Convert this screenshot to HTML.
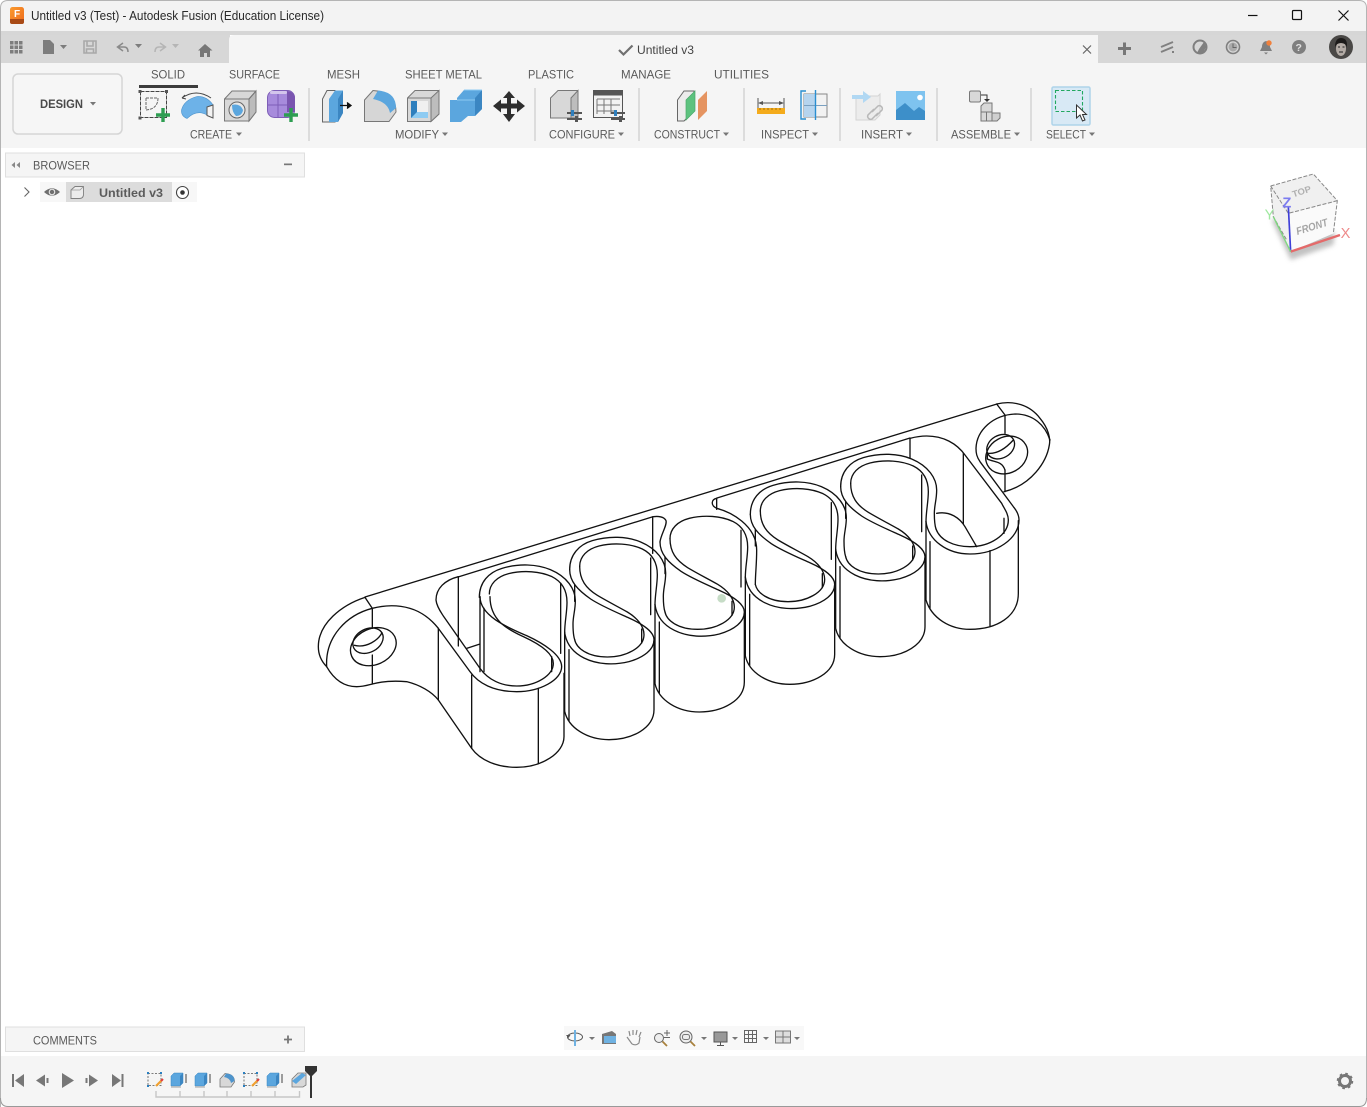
<!DOCTYPE html>
<html><head><meta charset="utf-8"><title>Untitled v3 (Test) - Autodesk Fusion (Education License)</title>
<style>html,body{margin:0;padding:0;background:#fff;overflow:hidden}svg{display:block}text{font-family:"Liberation Sans",sans-serif}</style></head>
<body>
<svg xmlns="http://www.w3.org/2000/svg" width="1367" height="1107" viewBox="0 0 1367 1107">
<defs>
<filter id="bl"><feGaussianBlur stdDeviation="7"/></filter>
<linearGradient id="org" x1="0" y1="0" x2="1" y2="1"><stop offset="0" stop-color="#fa9a2e"/><stop offset="1" stop-color="#ee6a1c"/></linearGradient>
<g id="to"><path d="M122,290 C122,245 150,215 190,203 C240,188 295,190 335,207 C385,228 410,265 410,300 C410,330 403,345 403,370 C403,390 404,405 408,417"/></g>
<g id="ti"><path d="M152,280 C152,250 175,228 210,219 C255,208 305,212 340,228 C370,243 385,270 385,305 C385,335 378,365 378,395"/></g>
<g id="b"><path d="M107,478 C112,515 135,540 165,555 C205,575 255,577 300,566 C345,553 375,530 375,500 C375,478 345,455 300,435 C260,417 215,398 185,378 C145,350 122,325 122,290"/>
<path d="M137,500 C142,525 175,552 235,552 C290,552 345,525 345,485 C345,460 325,435 295,417 C265,400 235,385 205,367 C170,345 152,320 152,280"/></g>
<g id="v"><path d="M120,530 V745 M107,478 V715 C118,765 175,800 240,800 C310,800 375,765 375,710 V505 M137,335 V385 M365,255 V425 M338,468 V510"/></g>
</defs>

<!-- backdrop -->
<rect width="1367" height="1107" fill="#fff"/>
<rect x="1366" y="130" width="1" height="40" fill="#b5562a"/>
<!-- title bar -->
<path d="M0,8 Q0,1 8,1 H1359 Q1366,1 1366,8 V31 H0Z" fill="#f3f3f3"/>
<rect x="0" y="31" width="1366" height="4" fill="#d6d6d6"/>
<rect x="0" y="35" width="230" height="28" fill="#d7d7d7"/>
<rect x="1098" y="35" width="268" height="28" fill="#d7d7d7"/>
<path d="M229,63 V40 Q229,35 234,35 H1098 V63Z" fill="#f5f5f5"/>
<rect x="0" y="63" width="1366" height="85" fill="#f5f5f5"/>
<path d="M0,1056 H1366 V1098 Q1366,1106 1358,1106 H8 Q0,1106 0,1098Z" fill="#f5f5f5"/>
<path d="M.5,1107 V8 Q.5,.5 8,.5 H1359 Q1366.5,.5 1366.5,8 V1098" fill="none" stroke="#b4b4b4"/>
<path d="M.5,1098 Q.5,1106.5 8,1106.5 H1359 Q1366.5,1106.5 1366.5,1098" fill="none" stroke="#999"/>

<!-- app logo + title -->
<rect x="10" y="7" width="14" height="17" rx="2.5" fill="url(#org)"/>
<path d="M10,19 H24 V22 Q24,24 22,24 H12 Q10,24 10,22Z" fill="#a84a16"/>
<text x="14" y="17" font-size="10" font-weight="bold" fill="#fff">F</text>
<text x="31" y="20" font-size="12.5" fill="#2a2a2a" textLength="293" lengthAdjust="spacingAndGlyphs">Untitled v3 (Test) - Autodesk Fusion (Education License)</text>
<path d="M1248,15.5 H1257.5" stroke="#111" stroke-width="1.2"/>
<rect x="1292.5" y="10.5" width="9" height="9" rx="1" fill="none" stroke="#111" stroke-width="1.2"/>
<path d="M1338.5,10.5 L1348.5,20.5 M1348.5,10.5 L1338.5,20.5" stroke="#111" stroke-width="1.2"/>

<!-- quick toolbar -->
<g fill="#7d7d7d"><rect x="10" y="41" width="3.5" height="3.5"/><rect x="14.5" y="41" width="3.5" height="3.5"/><rect x="19" y="41" width="3.5" height="3.5"/><rect x="10" y="45.5" width="3.5" height="3.5"/><rect x="14.5" y="45.5" width="3.5" height="3.5"/><rect x="19" y="45.5" width="3.5" height="3.5"/><rect x="10" y="50" width="3.5" height="3.5"/><rect x="14.5" y="50" width="3.5" height="3.5"/><rect x="19" y="50" width="3.5" height="3.5"/></g>
<path d="M43,40 H50 L54,44 V54 H43Z" fill="#7d7d7d"/><path d="M60,45 H67 L63.5,49Z" fill="#7d7d7d"/>
<path d="M84,41 H96 V53 H84Z M87,41 V46 H93 V41 M86.5,53 V49 H93.5 V53" fill="none" stroke="#a9a9a9" stroke-width="1.6"/>
<path d="M123,43 L117.5,47 L123,51 M118,47 H124 Q128,47 128,52" fill="none" stroke="#8a8a8a" stroke-width="1.5"/>
<path d="M135,44 H142 L138.5,48Z" fill="#7d7d7d"/>
<path d="M160,43 L165.5,47 L160,51 M165,47 H159 Q155,47 155,52" fill="none" stroke="#b5b5b5" stroke-width="1.5"/>
<path d="M172,44 H179 L175.5,48Z" fill="#b5b5b5"/>
<path d="M205,44 L198,50.5 H200 V57 H204 V53 H207 V57 H210 V50.5 H212.5Z" fill="#777"/>

<!-- doc tab -->
<path d="M619,50 L623.5,54.5 L632.5,45.5" fill="none" stroke="#707070" stroke-width="2.2"/>
<text x="637" y="54" font-size="12" fill="#444" textLength="57" lengthAdjust="spacingAndGlyphs">Untitled v3</text>
<path d="M1083,45.5 L1091,53.5 M1091,45.5 L1083,53.5" stroke="#666" stroke-width="1.2"/>
<path d="M1124.5,42.5 V55 M1118,48.5 H1131" stroke="#777" stroke-width="3"/>
<!-- right icons -->
<g stroke="#808080" stroke-width="2" fill="none"><path d="M1161,47 L1173,42 M1161,52 L1173,47"/><path d="M1172,52 h2"/></g>
<circle cx="1200" cy="47" r="6.5" fill="none" stroke="#7f7f7f" stroke-width="2"/><path d="M1199,49 L1204,42 L1206,47 L1203,53 L1197,53Z" fill="#7f7f7f"/>
<circle cx="1233" cy="47" r="6.5" fill="none" stroke="#7f7f7f" stroke-width="1.6"/><circle cx="1233" cy="47" r="4.5" fill="#aaa"/><path d="M1233,43.5 V47.5 H1236.5" stroke="#666" fill="none"/>
<path d="M1266,41 Q1270,42 1270,47 L1272,51 H1260 L1262,47 Q1262,42 1266,41Z M1264,52.5 H1268 L1266,54.5Z" fill="#7f7f7f"/><circle cx="1269" cy="43" r="2.7" fill="#f0803c"/>
<circle cx="1299" cy="47" r="7" fill="#7f7f7f"/><text x="1295.5" y="51" font-size="10.5" font-weight="bold" fill="#e0e0e0">?</text>
<circle cx="1341" cy="47" r="12" fill="#4a4846"/><ellipse cx="1341" cy="48.500" rx="5" ry="7.500" fill="#b3aba5"/><path d="M1335,45 Q1336,38 1341,38 Q1347,38 1347,45 L1347,48 Q1346,43 1341,43 Q1336,43 1335,48Z" fill="#1d1b1a"/><path d="M1338,47 h2 M1342.500,47 h2 M1339,52 h4" stroke="#222"/>

<!-- ribbon tabs -->
<g font-size="12" fill="#5a5a5a">
<text x="151" y="78.500" textLength="34" lengthAdjust="spacingAndGlyphs">SOLID</text>
<text x="229" y="78.500" textLength="51" lengthAdjust="spacingAndGlyphs">SURFACE</text>
<text x="327" y="78.500" textLength="33" lengthAdjust="spacingAndGlyphs">MESH</text>
<text x="405" y="78.500" textLength="77" lengthAdjust="spacingAndGlyphs">SHEET METAL</text>
<text x="528" y="78.500" textLength="46" lengthAdjust="spacingAndGlyphs">PLASTIC</text>
<text x="621" y="78.500" textLength="50" lengthAdjust="spacingAndGlyphs">MANAGE</text>
<text x="714" y="78.500" textLength="55" lengthAdjust="spacingAndGlyphs">UTILITIES</text>
<text x="190" y="138.500" textLength="42" lengthAdjust="spacingAndGlyphs">CREATE</text>
<text x="395" y="138.500" textLength="44" lengthAdjust="spacingAndGlyphs">MODIFY</text>
<text x="549" y="138.500" textLength="66" lengthAdjust="spacingAndGlyphs">CONFIGURE</text>
<text x="654" y="138.500" textLength="66" lengthAdjust="spacingAndGlyphs">CONSTRUCT</text>
<text x="761" y="138.500" textLength="48" lengthAdjust="spacingAndGlyphs">INSPECT</text>
<text x="861" y="138.500" textLength="42" lengthAdjust="spacingAndGlyphs">INSERT</text>
<text x="951" y="138.500" textLength="60" lengthAdjust="spacingAndGlyphs">ASSEMBLE</text>
<text x="1046" y="138.500" textLength="40" lengthAdjust="spacingAndGlyphs">SELECT</text>
</g>
<g fill="#777"><path d="M236,132.500 h6 l-3,3.500z M442,132.500 h6 l-3,3.500z M618,132.500 h6 l-3,3.500z M723,132.500 h6 l-3,3.500z M812,132.500 h6 l-3,3.500z M906,132.500 h6 l-3,3.500z M1014,132.500 h6 l-3,3.500z M1089,132.500 h6 l-3,3.500z"/></g>
<rect x="139" y="85" width="59" height="3" fill="#3c3c3c"/>
<rect x="13" y="74" width="109" height="60" rx="5" fill="#f6f6f6" stroke="#d5d5d5" stroke-width="1.5"/>
<text x="40" y="108" font-size="12" font-weight="bold" fill="#4a4a4a" textLength="43" lengthAdjust="spacingAndGlyphs">DESIGN</text>
<path d="M90,102 h6 l-3,3.500z" fill="#777"/>
<g fill="#dcdcdc"><rect x="308" y="88" width="2" height="53"/><rect x="534" y="88" width="2" height="53"/><rect x="638" y="88" width="2" height="53"/><rect x="743" y="88" width="2" height="53"/><rect x="839" y="88" width="2" height="53"/><rect x="936" y="88" width="2" height="53"/><rect x="1030" y="88" width="2" height="53"/></g>

<!-- CREATE icons -->
<rect x="140.500" y="91.500" width="26" height="26" fill="none" stroke="#444" stroke-width="1" stroke-dasharray="4 1"/>
<g fill="#555"><rect x="138.500" y="90" width="3" height="3"/><rect x="165" y="90" width="3" height="3"/><rect x="138.500" y="116.500" width="3" height="3"/></g>
<path d="M146,98 H158 M146,98 V110 M146,110 Q158,109 158,98" fill="none" stroke="#666" stroke-width="1" stroke-dasharray="3 1"/>
<path d="M163,108 V122 M156,115 H170" stroke="#2e9e52" stroke-width="3.4"/>
<path d="M181.500,110 Q184,100 197,96.500 Q207,96 213,105 V117 L207,115 Q197,109 187,118.500 Q181,116 181.500,110Z" fill="#6db2e8" stroke="#4e94cc" stroke-width=".6"/>
<path d="M207,107 L213,105 V118 L207,115.500Z" fill="#f3f3f3" stroke="#555"/><path d="M182,98 Q196,88 211,98 M182,98 l3,-3 M182,98 l4,1" fill="none" stroke="#444"/>
<path d="M224.500,99 L232,91 H256 V112 L249,121 H224.500Z" fill="#d8d8d8" stroke="#777"/><path d="M249,99 L256,91 V112 L249,121Z" fill="#bcbcbc" stroke="#777"/><path d="M224.500,99 H249 L256,91" fill="none" stroke="#777"/><circle cx="237" cy="110" r="8" fill="#e8e8e8" stroke="#666"/><path d="M232,105 Q240,103 243,110 Q242,116 236,116 Q232,112 232,105Z" fill="#5ba6de"/>
<rect x="267.500" y="90.500" width="27" height="27" rx="7" fill="#a78bdc" stroke="#7e5eb7"/><path d="M268,105 H287 M278,93 V117" stroke="#7e5eb7"/><path d="M287,91 Q295,92 295,98 V112 H287Z" fill="#7a55b0"/><rect x="270" y="91" width="17" height="3" rx="1.500" fill="#d3c5ec"/>
<path d="M291,108 V122 M284,115 H298" stroke="#2e9e52" stroke-width="3.4"/>

<!-- MODIFY icons -->
<path d="M322.500,99 L327,90.500 H335 V122 H322.500Z" fill="#ececec" stroke="#666"/><path d="M329,99 L335,90.500 H343 V113 L338,122 H329Z" fill="#5ba6de"/><path d="M338,99 L343,90.500 V113 L338,122Z" fill="#3b86c2"/><path d="M340,105.500 H350 M347,102.500 L351,105.500 L347,108.500" fill="#111" stroke="#111" stroke-width="1.3"/>
<path d="M364.500,100 L373,90.500 Q396,92 396,112 L389,121.500 H364.500Z" fill="#d6d6d6" stroke="#777"/><path d="M378,90.500 Q396,92 396,108 L390,113 Q388,102 373,99Z" fill="#5ba6de"/>
<path d="M407.500,98 L415,90.500 H439 V114 L431,121.500 H407.500Z" fill="#d8d8d8" stroke="#777"/><path d="M431,98 L439,90.500 V114 L431,121.500Z" fill="#bdbdbd" stroke="#777"/><path d="M407.500,98 H431" stroke="#777"/><rect x="411" y="101" width="17" height="17" fill="#f0f0f0"/><path d="M411,101 H417 V112 H428 V118 H411Z" fill="#2f7fbd"/><path d="M417,112 H428 V118 H411Z" fill="#8ecbf2"/>
<path d="M450,100 L457,100 V98 L464,90 H482 V109 L475,116 H468 L461,122 H450Z" fill="#5ba6de"/><path d="M475,98 L482,90 V109 L475,116Z" fill="#3b86c2"/><path d="M457,100 H475 M464,90 H482" stroke="#8ecbf2"/>
<path d="M509,91 L515,98 H511 V103.500 H517 V99.500 L525,106 L517,112.500 V108.500 H511 V114 H515 L509,122 L503,114 H507 V108.500 H501 V112.500 L493,106 L501,99.500 V103.500 H507 V98 H503Z" fill="#2e2e2e"/>

<!-- CONFIGURE icons -->
<path d="M550.500,98 L558,90.500 H578 V118 H550.500Z" fill="#d8d8d8" stroke="#777"/><path d="M571,98 L578,90.500 V118 H571Z" fill="#bdbdbd" stroke="#777"/>
<path d="M567,113 H582 M567,119 H582" stroke="#555" stroke-width="2"/><rect x="571" y="110" width="3" height="6" fill="#2f7fbd"/><rect x="575" y="116" width="3" height="6" fill="#555"/>
<rect x="593.500" y="90.500" width="29" height="27" fill="#f2f2f2" stroke="#555"/><rect x="593.500" y="90.500" width="29" height="5" fill="#555"/>
<path d="M597,99 H620 M597,105 H620 M597,111 H615 M597,99 V114 M604,99 V114 M611,99 V114" stroke="#777" fill="none"/>
<path d="M611,113 H625 M611,119 H625" stroke="#555" stroke-width="2"/><rect x="614" y="110" width="3" height="6" fill="#2f7fbd"/><rect x="619" y="116" width="3" height="6" fill="#555"/>

<!-- CONSTRUCT -->
<path d="M677.500,100 L684,91 H694 V111 L684,121 H677.500Z" fill="#ececec" stroke="#666"/><path d="M686,100 L695,91 V111 L686,120Z" fill="#5cc27e" stroke="#4aa86a" stroke-width=".7"/><path d="M698,100 L707,91 V111 L698,120Z" fill="#e59461"/>

<!-- INSPECT -->
<path d="M758,98 V108 M784,98 V108 M759,103 H783" stroke="#555" fill="none"/><path d="M758,103 l5,-2 v4z M784,103 l-5,-2 v4z" fill="#555"/>
<rect x="757" y="108" width="28" height="6" fill="#f4ab1c"/><path d="M760,108 v2 M764,108 v2 M768,108 v2 M772,108 v2 M776,108 v2 M780,108 v2" stroke="#a0700d"/>
<rect x="804" y="94" width="23" height="23" fill="#f2f2f2" stroke="#888"/><rect x="804" y="94" width="11" height="23" fill="#b6d4ee"/><path d="M804,105.500 H827 M815.500,94 V117" stroke="#7aa0c0"/>
<path d="M806,91 H801 V119 H806 M815.500,90 V120" fill="none" stroke="#2a8ed0" stroke-width="1.4"/>

<!-- INSERT -->
<path d="M856,96 H878 L880,94 V115 L875,120 H856Z" fill="#ececec" stroke="#d4d4d4"/><path d="M852,95 H863 V91 L871,97 L863,103 V99 H852Z" fill="#b1d8f3"/>
<path d="M872,112 L878,106 a3,3 0 0 1 4,4 L876,116 M878,113 L872,119 a3,3 0 0 1 -4,-4 L874,109" fill="none" stroke="#b8b8b8" stroke-width="1.5"/>
<rect x="896" y="91" width="29" height="29" fill="#7ec3ef"/><path d="M896,120 V110 L905,103 L914,111 L919,107 L925,111 V120Z" fill="#3d8fc9"/><circle cx="920" cy="97.500" r="2.800" fill="#fff"/>

<!-- ASSEMBLE -->
<rect x="969.500" y="91" width="11" height="11" rx="1.500" fill="#d8d8d8" stroke="#777"/>
<path d="M981,95 H987 V100" fill="none" stroke="#333"/><path d="M984,99 h6 l-3,3z" fill="#333"/>
<path d="M981,106 L984,103 H992 V121 H981Z" fill="#d8d8d8" stroke="#777"/><path d="M992,113 H1000 V118 L997,121 H992Z" fill="#cfcfcf" stroke="#777"/><path d="M981,112 H992" stroke="#777"/><path d="M986.500,112 V121" stroke="#777"/>

<!-- SELECT -->
<rect x="1052" y="87" width="38" height="38" rx="1.500" fill="#d8e9f5" stroke="#aed4ea" stroke-width="1.500"/>
<rect x="1055.500" y="90.500" width="27" height="21" fill="none" stroke="#22a860" stroke-width="1.100" stroke-dasharray="3.500 2"/>
<path d="M1076.500,105 L1076.500,118 L1080,115 L1082.500,121 L1085,120 L1082.500,114.500 L1086.500,114.500Z" fill="#fff" stroke="#333"/>

<!-- BROWSER -->
<rect x="5.500" y="153" width="299" height="24" fill="#f5f5f5" stroke="#dfdfdf"/>
<path d="M15,162 L11.500,165 L15,168Z M20,162 L16.500,165 L20,168Z" fill="#888"/>
<text x="33" y="169.500" font-size="12" fill="#5a5a5a" textLength="57" lengthAdjust="spacingAndGlyphs">BROWSER</text>
<rect x="284" y="163.500" width="8" height="1.700" fill="#777"/>
<path d="M24.500,187.500 L29,192 L24.500,196.500" fill="none" stroke="#666" stroke-width="1.100"/>
<rect x="40" y="182" width="157" height="20" fill="#f7f7f7"/>
<rect x="66" y="182" width="106" height="20" fill="#dcdcdc"/>
<path d="M44,192 Q52,184.500 60,192 Q52,199.500 44,192Z" fill="#6f6f6f"/><circle cx="52" cy="192" r="3.300" fill="#e8e8e8"/><circle cx="52" cy="192" r="2.200" fill="#6f6f6f"/>
<path d="M71,190 L75,186.500 H83.500 V195 Q83,198.500 79.500,198.500 H71Z" fill="#ececec" stroke="#808080" stroke-width=".9"/><path d="M71,190 H80 L83.500,186.500" fill="none" stroke="#999" stroke-width=".8"/>
<text x="99" y="197" font-size="12" font-weight="bold" fill="#5b5b5b" textLength="64" lengthAdjust="spacingAndGlyphs">Untitled v3</text>
<circle cx="182.500" cy="192.500" r="6" fill="#fff" stroke="#444" stroke-width="1.100"/><circle cx="182.500" cy="192.500" r="2.300" fill="#333"/>

<!-- view cube -->
<g transform="translate(920 0) scale(.33333)">
<path d="M1055,660 L1112,780 L1240,735 L1245,700 L1110,640Z" fill="#a8a8a8" opacity=".7" filter="url(#bl)"/>
<path d="M1052,558 L1180,522 L1252,602 L1240,700 L1112,755 L1060,650Z" fill="#f0f0f0"/>
<path d="M1105,640 L1250,605 L1240,700 L1112,755Z" fill="#fafafa"/>
<path d="M1052,558 L1180,522 L1252,602 L1240,700 M1252,602 L1105,640 L1052,558 L1060,650 L1100,720" fill="none" stroke="#888" stroke-width="3" stroke-dasharray="12 5"/>
<text transform="translate(1120 592) rotate(-18)" font-size="27" font-weight="bold" fill="#b0b0b0" textLength="58" lengthAdjust="spacingAndGlyphs">TOP</text>
<text transform="translate(1132 705) rotate(-17)" font-size="32" font-weight="bold" font-style="italic" fill="#a5a5a5" textLength="98" lengthAdjust="spacingAndGlyphs">FRONT</text>
<path d="M1112,755 L1105,620" stroke="#3f3fd8" stroke-width="5"/>
<path d="M1112,755 L1260,705" stroke="#e46a6a" stroke-width="7"/>
<path d="M1112,755 L1060,650" stroke="#7fd87f" stroke-width="4"/>
<text x="1087" y="622" font-size="44" font-weight="bold" fill="#7c7cf0">Z</text>
<text x="1262" y="714" font-size="44" fill="#ee8a8a">X</text>
<text x="1034" y="658" font-size="44" fill="#a0e8a0">Y</text>
</g>

<!-- MODEL -->
<g fill="none" stroke="#111" stroke-width="1.300" stroke-linejoin="round" stroke-linecap="round">
<path d="M365,597 L997,404 M458,577 L652,517 M717,498 L910,438"/>
</g>
<g transform="translate(800 390) scale(.33333)" fill="none" stroke="#111" stroke-width="4" stroke-linejoin="round" stroke-linecap="round">
<!-- S5 -->
<use href="#to"/><use href="#ti"/><use href="#b"/><use href="#v"/>
<!-- S4 -->
<g transform="translate(-271 83)"><use href="#to"/><use href="#ti"/><use href="#b"/><use href="#v"/></g>
<!-- S3 -->
<g transform="translate(-542 166)"><use href="#ti"/><use href="#b"/><use href="#v"/></g>
<!-- S2 -->
<g transform="translate(-813 249)"><use href="#to"/><use href="#ti"/><use href="#b"/><use href="#v"/></g>
<!-- S1 top -->
<g transform="translate(-1084 332)"><use href="#to"/><use href="#ti"/></g>
<!-- S6 and right lug -->
<path d="M408,417 C420,450 460,470 510,470 C570,470 625,435 625,390 C625,370 612,355 605,340 L495,195 C470,160 430,138 380,138 C360,138 345,141 330,145"/>
<path d="M378,395 C385,450 440,492 510,492 C590,492 657,445 657,390 C657,375 650,362 640,350 L540,215 C530,200 528,190 528,175 C530,120 580,75 645,72 C700,72 735,105 750,150"/>
<path d="M378,395 V630 C395,685 450,718 510,718 C590,718 655,680 655,610 V392 M390,455 V655 M570,482 V708 M490,190 V400 M612,385 V430 M330,145 V205"/>
<path d="M410,370 C450,362 480,385 495,410 L530,470"/>
<path d="M590,42 C640,30 690,45 720,85 C745,115 752,145 748,165 C740,215 695,285 612,305 M590,42 L615,75 V130 M615,240 V305"/>
<ellipse cx="620" cy="195" rx="65" ry="54" transform="rotate(-28 620 195)"/>
<ellipse cx="602" cy="170" rx="44" ry="34" transform="rotate(-30 602 170)"/>
<path d="M565,190 C595,192 622,170 640,150 M562,192 V207 C585,218 605,212 615,240"/>
</g>
<g transform="translate(560 470) scale(.33333)" fill="none" stroke="#111" stroke-width="4" stroke-linejoin="round" stroke-linecap="round">
<!-- S3 outer line and notches -->
<path d="M470,85 C455,88 450,105 470,115 C510,125 590,165 590,240 C590,285 586,310 586,343"/>
<path d="M300,216 C302,195 322,165 318,152 C313,140 295,138 280,140 M278,140 V250 M470,85 V118"/>
<circle cx="485" cy="385" r="13" fill="#c6dcc6" stroke="none"/>
</g>
<g transform="translate(310 540) scale(.33333)" fill="none" stroke="#111" stroke-width="4" stroke-linejoin="round" stroke-linecap="round">
<!-- left lug -->
<path d="M165,172 C95,195 25,250 25,320 C25,345 35,365 50,380 C70,415 100,440 140,440 C160,440 175,435 187,432 C220,423 255,422 290,425 C330,435 365,455 385,480 L485,625 C510,660 560,682 620,682 C695,682 762,640 762,590 V400"/>
<path d="M50,380 C45,290 110,225 187,205 C225,195 265,195 300,205 C335,215 365,240 385,265 L480,395 C505,430 550,455 620,455 C690,455 755,420 755,380 C755,345 700,310 650,287 C600,265 510,230 510,170"/>
<path d="M165,172 L187,205 V265 M187,345 V432 M385,265 V480 M485,405 V625 M685,445 V670"/>
<path d="M445,110 C405,120 378,145 378,180 C380,200 395,220 400,228 L510,385 C535,420 575,438 620,438 C680,438 730,405 730,370 C730,340 690,313 640,290 C590,267 540,240 540,170"/>
<path d="M445,110 V318 M470,325 L510,312 M510,170 V395 M522,205 V395 M752,130 V340 M725,350 V395"/>
<ellipse cx="190" cy="320" rx="71" ry="54" transform="rotate(-24 190 320)"/>
<ellipse cx="174" cy="302" rx="48" ry="35" transform="rotate(-28 174 302)"/>
<path d="M133,316 C170,325 205,300 216,278"/>
</g>

<!-- COMMENTS -->
<rect x="5.500" y="1027" width="299" height="24.500" fill="#f5f5f5" stroke="#dfdfdf"/>
<text x="33" y="1044.500" font-size="12" fill="#5a5a5a" textLength="64" lengthAdjust="spacingAndGlyphs">COMMENTS</text>
<path d="M288,1035.500 V1043.500 M284,1039.500 H292" stroke="#777" stroke-width="1.800"/>

<!-- nav bar -->
<rect x="564" y="1026" width="240" height="24" fill="#f8f8f8"/>
<ellipse cx="575" cy="1037" rx="7.500" ry="4" fill="none" stroke="#555"/><path d="M575,1030 V1046" stroke="#6fb2e2" stroke-width="2"/><path d="M566,1035 l2.500,3 l2,-3z" fill="#555"/>
<path d="M589,1037 h6 l-3,3z M701,1037 h6 l-3,3z M732,1037 h6 l-3,3z M763,1037 h6 l-3,3z M794,1037 h6 l-3,3z" fill="#777"/>
<path d="M602,1034 L612,1031 L616,1034 V1044 H602Z" fill="#777"/><rect x="604" y="1036" width="12" height="7" fill="#6fb2e2"/>
<path d="M632,1044 L627,1037 M630,1036 L629,1031 M633,1035 V1030 M636,1035 L637,1030 M639,1037 L641,1032 M632,1044 Q636,1046 639,1043 L640,1037" fill="none" stroke="#8a8a8a" stroke-width="1.200"/>
<circle cx="659" cy="1038" r="4.500" fill="#eee" stroke="#666"/><path d="M662.500,1041.500 L667,1046" stroke="#a8803c" stroke-width="1.800"/><path d="M667,1030 V1036 M664,1033 H670 M664,1037.500 H670" stroke="#666"/>
<circle cx="686" cy="1037" r="6" fill="#eee" stroke="#666"/><rect x="682.500" y="1034.500" width="7" height="5" rx="2" fill="none" stroke="#777"/><path d="M690.500,1041.500 L695,1046" stroke="#a8803c" stroke-width="1.800"/>
<rect x="714" y="1032" width="13" height="10" fill="#999" stroke="#555"/><path d="M720.500,1042 V1045 M717,1045.500 H724" stroke="#555"/>
<path d="M744.500,1030.500 H756.500 V1042.500 H744.500Z M744.500,1034.500 H756.500 M744.500,1038.500 H756.500 M748.500,1030.500 V1042.500 M752.500,1030.500 V1042.500" fill="none" stroke="#666"/>
<rect x="775.500" y="1031" width="15" height="12" fill="#ddd" stroke="#777"/><path d="M775.500,1037 H790.500 M783,1031 V1043" stroke="#777"/>

<!-- timeline controls -->
<g fill="#777">
<path d="M12,1074 H14 V1087 H12Z M24,1074 V1087 L15,1080.500Z"/>
<path d="M45,1074.500 L36,1080.500 L45,1086.500Z M46.500,1078 H48.500 V1083 H46.500Z"/>
<path d="M62,1073 L74,1080.500 L62,1088Z"/>
<path d="M89,1074.500 L98,1080.500 L89,1086.500Z M85.500,1078 H87.500 V1083 H85.500Z"/>
<path d="M112,1074 V1087 L121,1080.500Z M121.500,1074 H123.500 V1087 H121.500Z"/>
</g>
<!-- timeline features -->
<g>
<rect x="148" y="1073.500" width="13" height="12" fill="none" stroke="#555" stroke-width=".8" stroke-dasharray="2 1.500"/><path d="M147,1072 h2 v2 h-2z M160,1072 h2 v2 h-2z M147,1085 h2 v2 h-2z" fill="#2a7fc0"/><path d="M156,1086 L162,1080" stroke="#f0a030" stroke-width="2.200"/><path d="M161,1081 l2,-2" stroke="#e04040" stroke-width="2"/>
<path d="M171,1076 L174,1073 H183 V1083 L180,1086 H171Z" fill="#5ba6de" stroke="#3b86c2" stroke-width=".5"/><path d="M180,1076 L183,1073 V1083 L180,1086Z" fill="#3b86c2"/><path d="M186,1083 V1074" stroke="#444"/><path d="M171,1087 H181 " stroke="#bbb" stroke-width="1.500"/>
<path d="M195,1076 L198,1073 H207 V1083 L204,1086 H195Z" fill="#5ba6de" stroke="#3b86c2" stroke-width=".5"/><path d="M204,1076 L207,1073 V1083 L204,1086Z" fill="#3b86c2"/><path d="M210,1083 V1074" stroke="#444"/><path d="M195,1087 H205" stroke="#bbb" stroke-width="1.500"/>
<path d="M220,1079 L225,1073.500 Q234.500,1074 234.500,1082 L231,1087 H220Z" fill="#d8d8d8" stroke="#777" stroke-width=".8"/><path d="M226,1073.500 Q234.500,1074 234.500,1081 L231,1083 Q230,1078 224,1077Z" fill="#4e94cc"/>
<rect x="244" y="1073.500" width="13" height="12" fill="none" stroke="#555" stroke-width=".8" stroke-dasharray="2 1.500"/><path d="M243,1072 h2 v2 h-2z M256,1072 h2 v2 h-2z M243,1085 h2 v2 h-2z" fill="#2a7fc0"/><path d="M252,1086 L258,1080" stroke="#f0a030" stroke-width="2.200"/><path d="M257,1081 l2,-2" stroke="#e04040" stroke-width="2"/>
<path d="M267,1076 L270,1073 H279 V1083 L276,1086 H267Z" fill="#5ba6de" stroke="#3b86c2" stroke-width=".5"/><path d="M276,1076 L279,1073 V1083 L276,1086Z" fill="#3b86c2"/><path d="M282,1083 V1074" stroke="#444"/><path d="M267,1087 H277" stroke="#bbb" stroke-width="1.500"/>
<path d="M292,1079 L298,1073 H306 V1085 L303,1087 H292Z" fill="#d8d8d8" stroke="#777" stroke-width=".8"/><path d="M292,1081 L302,1073 L306,1075 L296,1084Z" fill="#5ba6de"/>
</g>
<path d="M156,1091 V1097 H299.500 V1091 M180,1091 V1097 M204,1091 V1097 M227,1091 V1097 M251,1091 V1097 M275,1091 V1097" fill="none" stroke="#c6c6c6" stroke-width="1.400"/>
<path d="M305,1066 H317 V1071 L312,1076 V1098 H310 V1076 L305,1071Z" fill="#333"/>
<!-- gear -->
<circle cx="1345" cy="1081" r="5.500" fill="none" stroke="#777" stroke-width="3"/><circle cx="1345" cy="1081" r="7" fill="none" stroke="#777" stroke-width="2.500" stroke-dasharray="2.500 3"/>
</svg>
</body></html>
